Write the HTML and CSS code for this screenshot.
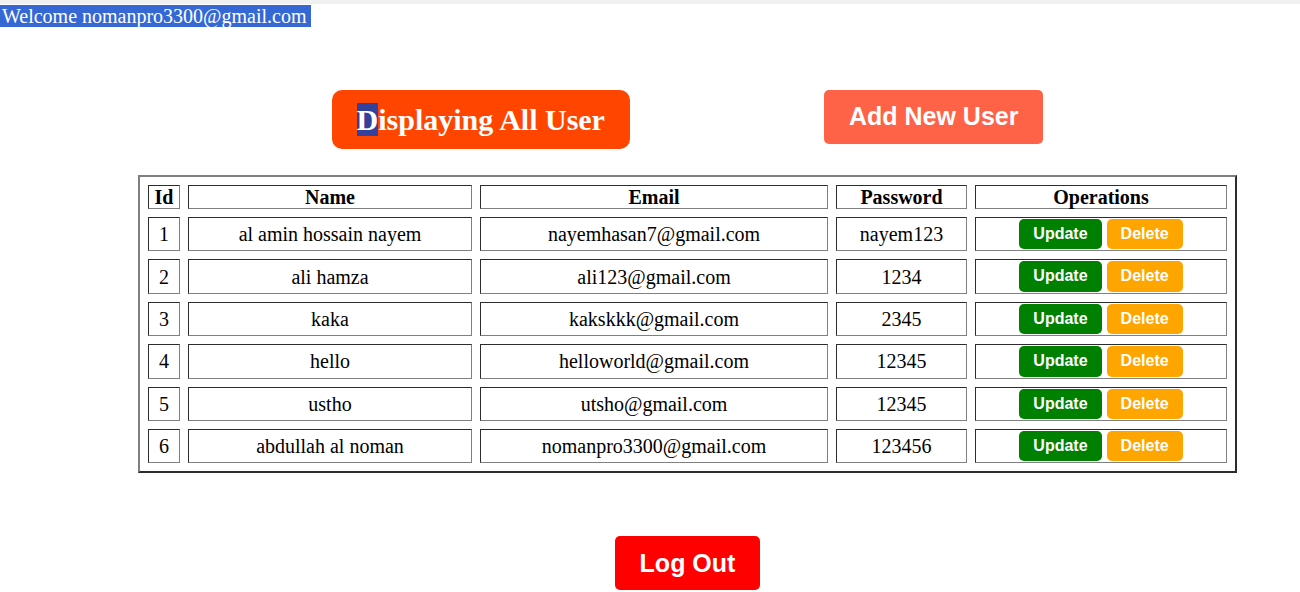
FILE: index.html
```html
<!DOCTYPE html>
<html>
<head>
<meta charset="utf-8">
<title>Users</title>
<link rel="stylesheet" href="styles.css">
</head>
<body>
<div class="topbar"></div>
<div class="welcome"><span class="welcome-text">Welcome nomanpro3300@gmail.com</span></div>
<main class="content">
  <div class="actions">
    <h1 class="title"><span class="sel">D</span>isplaying All User</h1>
    <a class="btn-add">Add New User</a>
  </div>
  <table class="users">
    <thead>
      <tr><th class="c-id">Id</th><th class="c-name">Name</th><th class="c-email">Email</th><th class="c-pass">Password</th><th class="c-ops">Operations</th></tr>
    </thead>
    <tbody>
      <tr><td>1</td><td>al amin hossain nayem</td><td>nayemhasan7@gmail.com</td><td>nayem123</td><td><button class="btn-update">Update</button> <button class="btn-delete">Delete</button></td></tr>
      <tr><td>2</td><td>ali hamza</td><td>ali123@gmail.com</td><td>1234</td><td><button class="btn-update">Update</button> <button class="btn-delete">Delete</button></td></tr>
      <tr><td>3</td><td>kaka</td><td>kakskkk@gmail.com</td><td>2345</td><td><button class="btn-update">Update</button> <button class="btn-delete">Delete</button></td></tr>
      <tr><td>4</td><td>hello</td><td>helloworld@gmail.com</td><td>12345</td><td><button class="btn-update">Update</button> <button class="btn-delete">Delete</button></td></tr>
      <tr><td>5</td><td>ustho</td><td>utsho@gmail.com</td><td>12345</td><td><button class="btn-update">Update</button> <button class="btn-delete">Delete</button></td></tr>
      <tr><td>6</td><td>abdullah al noman</td><td>nomanpro3300@gmail.com</td><td>123456</td><td><button class="btn-update">Update</button> <button class="btn-delete">Delete</button></td></tr>
    </tbody>
  </table>
  <div class="logout-wrap"><a class="btn-logout">Log Out</a></div>
</main>
</body>
</html>
```
FILE: styles.css
```css
html, body {
  margin: 0;
  padding: 0;
  background: #ffffff;
}
body {
  font-family: "Liberation Serif", "Times New Roman", serif;
  color: #000;
  overflow: hidden;
}
.topbar {
  height: 4px;
  background: #f0f0f0;
}
.welcome {
  height: 24px;
  font-size: 20px;
  line-height: 22px;
  padding-top: 1px;
}
.welcome-text {
  display: inline-block;
  background: #3568d4;
  color: #fff;
  padding: 0 4px 0 2px;
}
.content {
  padding-left: 75px;
}
.actions {
  display: flex;
  justify-content: center;
  align-items: flex-start;
  gap: 194px;
  margin-top: 61px;
}
.title {
  margin: 0;
  background: #ff4500;
  color: #fff;
  font-family: "Liberation Serif", "Times New Roman", serif;
  font-weight: bold;
  font-size: 30px;
  line-height: 35px;
  padding: 12px 25px;
  border-radius: 10px;
}
.sel {
  background: #33409c;
}
.btn-add {
  display: block;
  background: #ff6347;
  color: #fff;
  font-family: "Liberation Sans", Arial, sans-serif;
  font-weight: bold;
  font-size: 25px;
  line-height: 30px;
  padding: 11px 25px 13px;
  border-radius: 5px;
}
.users {
  margin: 26px auto 0;
  border: 2px outset #808080;
  border-spacing: 8px;
  font-size: 20px;
}
.users th, .users td {
  border: 1px inset #808080;
  padding: 1px;
  text-align: center;
}
.users th {
  line-height: 20px;
}
.users td {
  line-height: 22px;
}
.c-id { width: 28px; }
.c-name { width: 280px; }
.c-email { width: 344px; }
.c-pass { width: 127px; }
.c-ops { width: 248px; }
.btn-update, .btn-delete {
  border: none;
  color: #fff;
  font-family: "Liberation Sans", Arial, sans-serif;
  font-weight: bold;
  font-size: 16px;
  line-height: 18.4px;
  padding: 6px 14px;
  border-radius: 5px;
  vertical-align: middle;
}
.btn-update { background: #008000; }
.btn-delete { background: #ffa500; }
.logout-wrap {
  display: flex;
  justify-content: center;
  margin-top: 63px;
}
.btn-logout {
  display: block;
  background: #ff0000;
  color: #fff;
  font-family: "Liberation Sans", Arial, sans-serif;
  font-weight: bold;
  font-size: 25px;
  line-height: 30px;
  padding: 12px 25px;
  border-radius: 5px;
}
```
